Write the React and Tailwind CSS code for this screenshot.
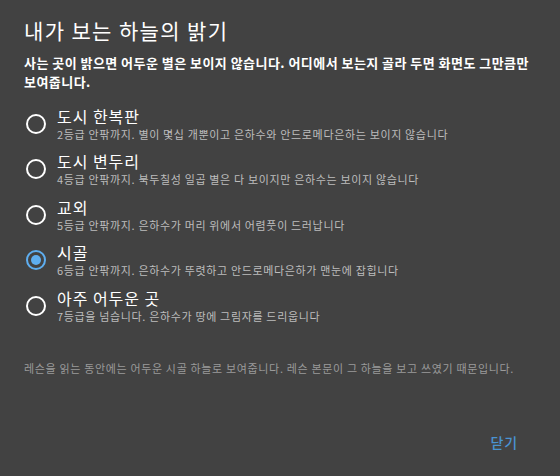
import React, { useState } from "react";

const FONT = { fontFamily: '"Noto Sans CJK KR", "Noto Sans", sans-serif' };

const OPTIONS = [
  { id: "city", label: "도시 한복판", hint: "2등급 안팎까지. 별이 몇십 개뿐이고 은하수와 안드로메다은하는 보이지 않습니다" },
  { id: "suburb", label: "도시 변두리", hint: "4등급 안팎까지. 북두칠성 일곱 별은 다 보이지만 은하수는 보이지 않습니다" },
  { id: "outskirts", label: "교외", hint: "5등급 안팎까지. 은하수가 머리 위에서 어렴풋이 드러납니다" },
  { id: "rural", label: "시골", hint: "6등급 안팎까지. 은하수가 뚜렷하고 안드로메다은하가 맨눈에 잡힙니다" },
  { id: "dark", label: "아주 어두운 곳", hint: "7등급을 넘습니다. 은하수가 땅에 그림자를 드리웁니다" },
];

// radio icon, same geometry as the material one (ring r 8-10, dot r 5)
const RadioIcon = ({ checked }) => (
  <svg width="24" height="24" viewBox="0 0 24 24" className={checked ? "text-[#5eaef0]" : "text-white"}>
    <circle cx="12" cy="12" r="9" fill="none" stroke="currentColor" strokeWidth="2" />
    {checked && <circle cx="12" cy="12" r="5" fill="currentColor" />}
  </svg>
);

const SkyOption = ({ option, checked, onPick }) => (
  <label className="flex h-[45.5px] cursor-pointer items-center" onClick={() => onPick(option.id)}>
    <span className="flex h-[42px] w-[42px] items-center justify-center">
      <RadioIcon checked={checked} />
    </span>
    <span className="flex flex-col">
      <span className="text-[16px] leading-[20px] tracking-[0.06em] text-white">{option.label}</span>
      <span className="text-[11px] leading-[16px] tracking-[0.06em] text-[#bdbdbd]">{option.hint}</span>
    </span>
  </label>
);

export default function App() {
  const [sky, setSky] = useState("rural");

  return (
    <div className="flex h-[476px] w-[560px] flex-col bg-[#424242] px-6 pt-[14px]" style={FONT}>
      <h2 className="text-[21px] leading-[32px] font-normal tracking-[0.065em] text-white">내가 보는 하늘의 밝기</h2>
      <p className="mt-2 text-[13px] leading-[18.5px] font-semibold tracking-[0.035em] text-white">
        사는 곳이 밝으면 어두운 별은 보이지 않습니다. 어디에서 보는지 골라 두면 화면도 그만큼만 보여줍니다.
      </p>

      {/* options */}
      <div className="-ml-[9px] mt-[10px] flex flex-col">
        {OPTIONS.map((o) => (
          <SkyOption key={o.id} option={o} checked={sky === o.id} onPick={setSky} />
        ))}
      </div>

      <p className="mt-[31px] text-[11px] leading-[16px] tracking-[0.06em] text-[#9a9a9a]">
        레슨을 읽는 동안에는 어두운 시골 하늘로 보여줍니다. 레슨 본문이 그 하늘을 보고 쓰였기 때문입니다.
      </p>

      <div className="mt-auto flex justify-end pb-[16px] pr-[10px]">
        <button className="rounded px-2 py-[6px] text-[14px] leading-[24px] font-medium tracking-[0.06em] text-[#4a93d2]">닫기</button>
      </div>
    </div>
  );
}
